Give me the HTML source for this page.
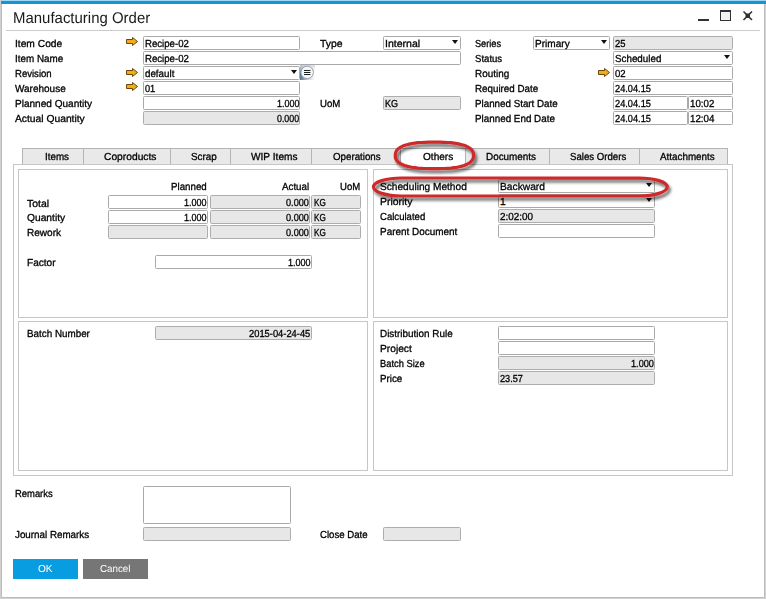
<!DOCTYPE html>
<html><head><meta charset="utf-8"><title>Manufacturing Order</title>
<style>
html,body{margin:0;padding:0}
body{width:766px;height:599px;position:relative;overflow:hidden;background:#fff;font-family:"Liberation Sans",sans-serif;font-size:10px;color:#000}
#win{position:absolute;left:0;top:0;width:766px;height:599px;box-sizing:border-box;border-left:1px solid #d0d0d0;border-right:1px solid #d2d2d2;border-bottom:1px solid #d2d2d2;box-shadow:inset 1px 0 0 #bcbcbc,inset -1px 0 0 #bcbcbc,inset 0 -1px 0 #bcbcbc;background:#fff}
#bar{position:absolute;left:1px;top:0;width:765px;height:4px;background:#1893d3;border-top:1px solid #9fd8f3;box-sizing:border-box}
#sep{position:absolute;left:6px;top:30px;width:754px;height:1px;background:#cbcbcb}
.t{position:absolute;transform-origin:0 0;height:14px;line-height:14px;white-space:nowrap;text-rendering:geometricPrecision;font-size:10.2px;color:#000;-webkit-text-stroke:0.3px #000}
.t.w{color:#fff;-webkit-text-stroke:0}
.t.ti{font-size:15.5px;line-height:20px;height:20px;color:#1a1a1a;-webkit-text-stroke:0}
.i{position:absolute;height:14px;box-sizing:border-box;border:1px solid #a9a9a9;border-radius:1.5px;background:#fff}
.d{background:#e7e7e7;border-color:#adadad}
.dd:after{content:"";position:absolute;right:1.9px;top:3px;border-left:3.6px solid transparent;border-right:3.6px solid transparent;border-top:4.3px solid #111}
.ar{position:absolute;width:14px;height:11px}
.tab{position:absolute;top:148px;height:16px;box-sizing:border-box;border:1px solid #b4b4b4;border-bottom:none;border-left:none;background:#e9e9e9}
.pn{position:absolute;box-sizing:border-box;border:1px solid #c6c6c6;background:#fff}
.btn{position:absolute;top:559px;height:20px;width:65px}
</style></head><body>
<div id="win"></div>
<div id="bar"></div>
<div id="sep"></div>

<!-- window controls -->
<svg style="position:absolute;left:696px;top:8px" width="60" height="16" viewBox="696 8 60 16">
<rect x="698" y="19" width="11" height="2" fill="#333"/>
<rect x="720.5" y="11" width="10" height="9.5" fill="#f2f2f2" stroke="#333" stroke-width="1"/>
<rect x="720" y="10" width="11" height="2" fill="#333"/>
<path d="M743.5 11.5 L752 20 M752 11.5 L743.5 20" stroke="#333" stroke-width="1.6" fill="none"/>
<rect x="745.5" y="13.5" width="4.5" height="4.5" fill="#333"/>
</svg>

<!-- link arrows -->
<svg class="ar" style="left:125px;top:36px" viewBox="0 0 14 11"><path d="M1.5 3.5H7.5V1.5L12.5 5.5L7.5 9.5V7.5H1.5Z" fill="#f2ad16" stroke="#6b4708" stroke-width="1" stroke-linejoin="miter"/></svg>
<svg class="ar" style="left:125px;top:67px" viewBox="0 0 14 11"><path d="M1.5 3.5H7.5V1.5L12.5 5.5L7.5 9.5V7.5H1.5Z" fill="#f2ad16" stroke="#6b4708" stroke-width="1" stroke-linejoin="miter"/></svg>
<svg class="ar" style="left:125px;top:81px" viewBox="0 0 14 11"><path d="M1.5 3.5H7.5V1.5L12.5 5.5L7.5 9.5V7.5H1.5Z" fill="#f2ad16" stroke="#6b4708" stroke-width="1" stroke-linejoin="miter"/></svg>
<svg class="ar" style="left:597px;top:67px" viewBox="0 0 14 11"><path d="M1.5 3.5H7.5V1.5L12.5 5.5L7.5 9.5V7.5H1.5Z" fill="#f2ad16" stroke="#6b4708" stroke-width="1" stroke-linejoin="miter"/></svg>

<!-- header boxes -->
<div class="i" style="left:143px;top:36px;width:157px"></div>
<div class="i" style="left:143px;top:51px;width:318px"></div>
<div class="i dd" style="left:143px;top:66px;width:157px"></div>
<svg style="position:absolute;left:300px;top:65px" width="15" height="15" viewBox="0 0 15 15"><defs><linearGradient id="ig" x1="0" y1="0" x2="1" y2="0"><stop offset="0" stop-color="#53728f"/><stop offset="0.55" stop-color="#c9d3de"/><stop offset="1" stop-color="#fff"/></linearGradient><linearGradient id="ig2" x1="0" y1="0" x2="0" y2="1"><stop offset="0" stop-color="#d4d6d8" stop-opacity="0.9"/><stop offset="0.6" stop-color="#fff" stop-opacity="0"/></linearGradient></defs><rect x="0" y="0" width="15" height="15" fill="url(#ig)"/><rect x="0" y="0" width="15" height="15" fill="url(#ig2)"/><circle cx="7.2" cy="7.4" r="6.2" fill="#f4f7fa" stroke="#9aa3ad" stroke-width="1"/><path d="M4 5.5h6.4M4 7.5h6.4M4 9.5h6.4" stroke="#1c1c1c" stroke-width="1.1"/></svg>
<div class="i" style="left:143px;top:81px;width:157px"></div>
<div class="i" style="left:143px;top:96px;width:157px"></div>
<div class="i d" style="left:143px;top:111px;width:157px"></div>
<div class="i dd" style="left:383px;top:36px;width:78px"></div>
<div class="i d" style="left:383px;top:96px;width:78px"></div>
<div class="i dd" style="left:533px;top:36px;width:77px"></div>
<div class="i d" style="left:613px;top:36px;width:120px"></div>
<div class="i dd" style="left:613px;top:51px;width:120px"></div>
<div class="i" style="left:613px;top:66px;width:120px"></div>
<div class="i" style="left:613px;top:81px;width:120px"></div>
<div class="i" style="left:613px;top:96px;width:75px"></div>
<div class="i" style="left:688px;top:96px;width:45px"></div>
<div class="i" style="left:613px;top:111px;width:75px"></div>
<div class="i" style="left:688px;top:111px;width:45px"></div>

<!-- panels -->
<div class="pn" style="left:13px;top:164px;width:720px;height:312px"></div>
<div class="pn" style="left:18px;top:169px;width:350px;height:149px"></div>
<div class="pn" style="left:373px;top:169px;width:355px;height:149px"></div>
<div class="pn" style="left:18px;top:321px;width:350px;height:150px"></div>
<div class="pn" style="left:373px;top:321px;width:355px;height:150px"></div>

<!-- tabs -->
<div class="tab" style="left:22px;width:62px;border-left:1px solid #b4b4b4"></div>
<div class="tab" style="left:84px;width:87px"></div>
<div class="tab" style="left:171px;width:60px"></div>
<div class="tab" style="left:231px;width:81px"></div>
<div class="tab" style="left:312px;width:89px"></div>
<div class="tab" style="left:401px;width:65px;background:#fff;height:17px"></div>
<div class="tab" style="left:466px;width:84px"></div>
<div class="tab" style="left:550px;width:90px"></div>
<div class="tab" style="left:640px;width:88px"></div>

<!-- top-left panel boxes -->
<div class="i" style="left:108px;top:195px;width:100px"></div>
<div class="i d" style="left:210px;top:195px;width:100px"></div>
<div class="i d" style="left:311px;top:195px;width:50px"></div>
<div class="i" style="left:108px;top:210px;width:100px"></div>
<div class="i d" style="left:210px;top:210px;width:100px"></div>
<div class="i d" style="left:311px;top:210px;width:50px"></div>
<div class="i d" style="left:108px;top:225px;width:100px"></div>
<div class="i d" style="left:210px;top:225px;width:100px"></div>
<div class="i d" style="left:311px;top:225px;width:50px"></div>
<div class="i" style="left:155px;top:255px;width:157px"></div>

<!-- top-right panel boxes -->
<div class="i dd" style="left:498px;top:179px;width:157px"></div>
<div class="i dd" style="left:498px;top:194px;width:157px"></div>
<div class="i d" style="left:498px;top:209px;width:157px"></div>
<div class="i" style="left:498px;top:224px;width:157px"></div>

<!-- bottom-left panel -->
<div class="i d" style="left:155px;top:326px;width:157px"></div>

<!-- bottom-right panel -->
<div class="i" style="left:498px;top:326px;width:157px"></div>
<div class="i" style="left:498px;top:341px;width:157px"></div>
<div class="i d" style="left:498px;top:356px;width:157px"></div>
<div class="i d" style="left:498px;top:371px;width:157px"></div>

<!-- bottom -->
<div class="i" style="left:143px;top:486px;width:148px;height:38px"></div>
<div class="i d" style="left:143px;top:527px;width:148px"></div>
<div class="i d" style="left:383px;top:527px;width:78px"></div>
<div class="btn" style="left:13px;background:#089de1"></div>
<div class="btn" style="left:83px;background:#767676"></div>

<span class="t " id="t0" style="left:15.00px;top:38px;transform:scaleX(1.0042)">Item Code</span>
<span class="t " id="t1" style="left:15.00px;top:53px;transform:scaleX(0.9664)">Item Name</span>
<span class="t " id="t2" style="left:15.00px;top:68px;transform:scaleX(0.9381)">Revision</span>
<span class="t " id="t3" style="left:15.00px;top:83px;transform:scaleX(0.9805)">Warehouse</span>
<span class="t " id="t4" style="left:15.00px;top:98px;transform:scaleX(0.9863)">Planned Quantity</span>
<span class="t " id="t5" style="left:15.00px;top:113px;transform:scaleX(1.0098)">Actual Quantity</span>
<span class="t " id="t6" style="left:145.00px;top:38px;transform:scaleX(0.9447)">Recipe-02</span>
<span class="t " id="t7" style="left:145.00px;top:53px;transform:scaleX(0.9447)">Recipe-02</span>
<span class="t " id="t8" style="left:145.00px;top:68px;transform:scaleX(0.9596)">default</span>
<span class="t " id="t9" style="left:145.00px;top:83px;transform:scaleX(0.8991)">01</span>
<span class="t " id="t10" style="left:277.00px;top:98px;transform:scaleX(0.8777)">1.000</span>
<span class="t " id="t11" style="left:277.00px;top:113px;transform:scaleX(0.8667)">0.000</span>
<span class="t " id="t12" style="left:320.00px;top:38px;transform:scaleX(1.0219)">Type</span>
<span class="t " id="t13" style="left:385.00px;top:38px;transform:scaleX(1.0346)">Internal</span>
<span class="t " id="t14" style="left:320.00px;top:98px;transform:scaleX(0.9475)">UoM</span>
<span class="t " id="t15" style="left:385.00px;top:98px;transform:scaleX(0.8880)">KG</span>
<span class="t " id="t16" style="left:475.00px;top:38px;transform:scaleX(0.9004)">Series</span>
<span class="t " id="t17" style="left:475.00px;top:53px;transform:scaleX(0.9404)">Status</span>
<span class="t " id="t18" style="left:475.00px;top:68px;transform:scaleX(0.9730)">Routing</span>
<span class="t " id="t19" style="left:475.00px;top:83px;transform:scaleX(0.9602)">Required Date</span>
<span class="t " id="t20" style="left:475.00px;top:98px;transform:scaleX(0.9610)">Planned Start Date</span>
<span class="t " id="t21" style="left:475.00px;top:113px;transform:scaleX(0.9661)">Planned End Date</span>
<span class="t " id="t22" style="left:535.00px;top:38px;transform:scaleX(0.9901)">Primary</span>
<span class="t " id="t23" style="left:615.00px;top:38px;transform:scaleX(0.9254)">25</span>
<span class="t " id="t24" style="left:615.00px;top:53px;transform:scaleX(0.9629)">Scheduled</span>
<span class="t " id="t25" style="left:615.00px;top:68px;transform:scaleX(0.9393)">02</span>
<span class="t " id="t26" style="left:615.00px;top:83px;transform:scaleX(0.9055)">24.04.15</span>
<span class="t " id="t27" style="left:615.00px;top:98px;transform:scaleX(0.9055)">24.04.15</span>
<span class="t " id="t28" style="left:690.00px;top:98px;transform:scaleX(0.9522)">10:02</span>
<span class="t " id="t29" style="left:615.00px;top:113px;transform:scaleX(0.9055)">24.04.15</span>
<span class="t " id="t30" style="left:690.00px;top:113px;transform:scaleX(0.9589)">12:04</span>
<span class="t " id="t31" style="left:45.00px;top:151px;transform:scaleX(0.9628)">Items</span>
<span class="t " id="t32" style="left:104.00px;top:151px;transform:scaleX(1.0065)">Coproducts</span>
<span class="t " id="t33" style="left:191.00px;top:151px;transform:scaleX(0.9665)">Scrap</span>
<span class="t " id="t34" style="left:251.00px;top:151px;transform:scaleX(0.9943)">WIP Items</span>
<span class="t " id="t35" style="left:333.00px;top:151px;transform:scaleX(0.9565)">Operations</span>
<span class="t " id="t36" style="left:423.00px;top:151px;transform:scaleX(0.9897)">Others</span>
<span class="t " id="t37" style="left:486.00px;top:151px;transform:scaleX(0.9710)">Documents</span>
<span class="t " id="t38" style="left:570.00px;top:151px;transform:scaleX(0.9452)">Sales Orders</span>
<span class="t " id="t39" style="left:660.00px;top:151px;transform:scaleX(0.9658)">Attachments</span>
<span class="t " id="t40" style="left:171.00px;top:181px;transform:scaleX(0.9551)">Planned</span>
<span class="t " id="t41" style="left:282.00px;top:181px;transform:scaleX(0.9582)">Actual</span>
<span class="t " id="t42" style="left:340.00px;top:181px;transform:scaleX(0.9368)">UoM</span>
<span class="t " id="t43" style="left:27.00px;top:198px;transform:scaleX(1.0234)">Total</span>
<span class="t " id="t44" style="left:27.00px;top:212px;transform:scaleX(1.0061)">Quantity</span>
<span class="t " id="t45" style="left:27.00px;top:227px;transform:scaleX(0.9854)">Rework</span>
<span class="t " id="t46" style="left:27.00px;top:257px;transform:scaleX(0.9902)">Factor</span>
<span class="t " id="t47" style="left:184.00px;top:197px;transform:scaleX(0.8861)">1.000</span>
<span class="t " id="t48" style="left:184.00px;top:212px;transform:scaleX(0.8861)">1.000</span>
<span class="t " id="t49" style="left:286.00px;top:197px;transform:scaleX(0.8999)">0.000</span>
<span class="t " id="t50" style="left:314.00px;top:197px;transform:scaleX(0.8022)">KG</span>
<span class="t " id="t51" style="left:286.00px;top:212px;transform:scaleX(0.8999)">0.000</span>
<span class="t " id="t52" style="left:314.00px;top:212px;transform:scaleX(0.8022)">KG</span>
<span class="t " id="t53" style="left:286.00px;top:227px;transform:scaleX(0.8999)">0.000</span>
<span class="t " id="t54" style="left:314.00px;top:227px;transform:scaleX(0.8022)">KG</span>
<span class="t " id="t55" style="left:288.00px;top:257px;transform:scaleX(0.8855)">1.000</span>
<span class="t " id="t56" style="left:380.00px;top:181px;transform:scaleX(0.9950)">Scheduling Method</span>
<span class="t " id="t57" style="left:380.00px;top:196px;transform:scaleX(1.0242)">Priority</span>
<span class="t " id="t58" style="left:380.00px;top:211px;transform:scaleX(0.9389)">Calculated</span>
<span class="t " id="t59" style="left:380.00px;top:226px;transform:scaleX(0.9753)">Parent Document</span>
<span class="t " id="t60" style="left:500.00px;top:181px;transform:scaleX(1.0055)">Backward</span>
<span class="t " id="t61" style="left:500.00px;top:196px;transform:scaleX(1.0000)">1</span>
<span class="t " id="t62" style="left:500.00px;top:211px;transform:scaleX(0.9716)">2:02:00</span>
<span class="t " id="t63" style="left:27.00px;top:328px;transform:scaleX(0.9658)">Batch Number</span>
<span class="t " id="t64" style="left:249.00px;top:328px;transform:scaleX(0.9173)">2015-04-24-45</span>
<span class="t " id="t65" style="left:380.00px;top:328px;transform:scaleX(0.9722)">Distribution Rule</span>
<span class="t " id="t66" style="left:380.00px;top:343px;transform:scaleX(1.0028)">Project</span>
<span class="t " id="t67" style="left:380.00px;top:358px;transform:scaleX(0.9151)">Batch Size</span>
<span class="t " id="t68" style="left:380.00px;top:373px;transform:scaleX(0.9593)">Price</span>
<span class="t " id="t69" style="left:631.00px;top:358px;transform:scaleX(0.8994)">1.000</span>
<span class="t " id="t70" style="left:500.00px;top:373px;transform:scaleX(0.9003)">23.57</span>
<span class="t " id="t71" style="left:15.00px;top:488px;transform:scaleX(0.9244)">Remarks</span>
<span class="t " id="t72" style="left:15.00px;top:529px;transform:scaleX(0.9630)">Journal Remarks</span>
<span class="t " id="t73" style="left:320.00px;top:529px;transform:scaleX(0.9456)">Close Date</span>
<span class="t w" id="t74" style="left:38.00px;top:562.5px;transform:scaleX(0.9924)">OK</span>
<span class="t w" id="t75" style="left:100.00px;top:562.5px;transform:scaleX(0.9614)">Cancel</span>
<span class="t ti" id="t76" style="left:13.00px;top:8.8px;transform:scaleX(0.9651)">Manufacturing Order</span>

<!-- red annotations -->
<svg class="red" style="position:absolute;left:360px;top:130px" width="330" height="80" viewBox="360 130 330 80">
<defs><filter id="sh" x="-10%" y="-40%" width="120%" height="190%"><feGaussianBlur in="SourceAlpha" stdDeviation="1.8"/><feOffset dx="2" dy="3"/><feComponentTransfer><feFuncA type="linear" slope="0.6"/></feComponentTransfer><feMerge><feMergeNode/><feMergeNode in="SourceGraphic"/></feMerge></filter></defs>
<path d="M473.5 155.4 L473.4 157.3 L473.0 158.7 L472.4 159.9 L471.6 161.0 L470.5 162.1 L469.2 163.0 L467.7 163.9 L466.0 164.7 L464.0 165.5 L461.9 166.1 L459.5 166.7 L456.9 167.3 L454.0 167.7 L451.0 168.1 L447.7 168.3 L444.0 168.5 L440.0 168.7 L434.4 168.7 L428.8 168.7 L424.8 168.5 L421.1 168.3 L417.8 168.1 L414.8 167.7 L411.9 167.3 L409.3 166.7 L406.9 166.1 L404.8 165.5 L402.8 164.7 L401.1 163.9 L399.6 163.0 L398.3 162.1 L397.2 161.0 L396.4 159.9 L395.8 158.7 L395.4 157.3 L395.3 155.4 L395.4 153.5 L395.8 152.1 L396.4 150.9 L397.2 149.8 L398.3 148.7 L399.6 147.8 L401.1 146.9 L402.8 146.1 L404.8 145.3 L406.9 144.7 L409.3 144.1 L411.9 143.5 L414.8 143.1 L417.8 142.7 L421.1 142.5 L424.8 142.3 L428.8 142.1 L434.4 142.1 L440.0 142.1 L444.0 142.3 L447.7 142.5 L451.0 142.7 L454.0 143.1 L456.9 143.5 L459.5 144.1 L461.9 144.7 L464.0 145.3 L466.0 146.1 L467.7 146.9 L469.2 147.8 L470.5 148.7 L471.6 149.8 L472.4 150.9 L473.0 152.1 L473.4 153.5Z" fill="none" stroke="#cf2a2b" stroke-width="3.2" stroke-linejoin="round" filter="url(#sh)"/>
<rect x="373.5" y="178" width="293.7" height="18" rx="28" ry="9" fill="none" stroke="#cf2a2b" stroke-width="3.2" filter="url(#sh)"/>
</svg>
</body></html>
